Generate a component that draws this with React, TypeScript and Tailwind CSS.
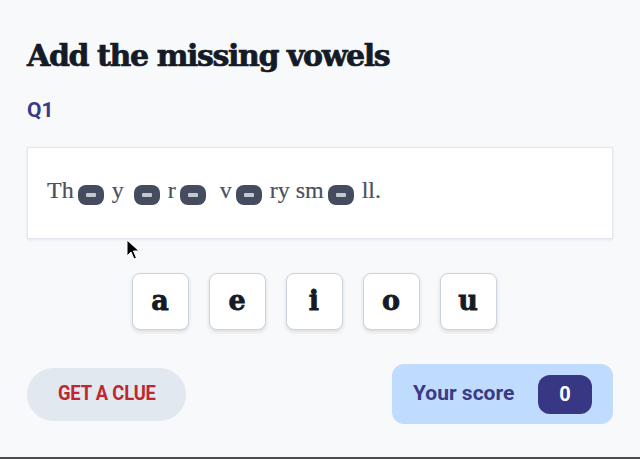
import React from "react";

const Blank = () => (
  <span className="inline-block w-[26px] h-[20px] rounded-[8px] bg-[#454c5f] ml-[4px] mr-[8px] align-[-7px] pt-[8px]">
    <span className="block mx-auto w-[10px] h-[4px] rounded-[1px] bg-[#c3c7cf]" />
  </span>
);

export default function App() {
  const vowels = ["a", "e", "i", "o", "u"];
  return (
    <div className="relative h-[459px] bg-[#f8f9fb] border-b-2 border-[#4d4d4d] px-[27px] pt-[36px] overflow-hidden">
      <h1 className="text-[30px] leading-[40px] font-bold text-[#151b26] [font-family:'DejaVu_Serif',serif] tracking-[-1.4px] [-webkit-text-stroke:0.7px_#151b26]">
        Add the missing vowels
      </h1>
      <div className="mt-[20px] text-[21px] leading-[28px] font-bold text-[#383a8a] [font-family:Roboto,sans-serif]">
        Q1
      </div>
      <div className="mt-[23px] h-[92px] bg-white border border-[#e1e6ee] shadow-[0_1px_3px_rgba(0,0,0,0.08)] flex items-center pl-[19px] pb-[5px]">
        <p className="text-[24px] leading-[28px] text-[#4a5060] [font-family:'Liberation_Serif',serif] [-webkit-text-stroke:0.2px_#4a5060]">
          Th<Blank />y <Blank />r<Blank /> v<Blank />ry sm<Blank />ll.
        </p>
      </div>
      <div className="mt-[34px] flex justify-center gap-[20px] pr-[12px]">
        {vowels.map((v) => (
          <button
            key={v}
            className="w-[57px] h-[57px] rounded-[8px] bg-white border border-[#cbd3df] shadow-[0_2px_4px_rgba(0,0,0,0.12)] flex items-center justify-center text-[27px] font-bold text-[#151b26] [font-family:'DejaVu_Serif',serif] [-webkit-text-stroke:0.8px_#151b26]"
          >
            {v}
          </button>
        ))}
      </div>
      <div className="mt-[34px] flex items-center justify-between">
        <button className="w-[159px] h-[53px] rounded-full bg-[#e2e8f0] text-[#c0262d] text-[21px] font-bold uppercase [font-family:Roboto,sans-serif] flex items-center justify-center">
          <span className="inline-block scale-x-[0.875] whitespace-nowrap tracking-[-0.2px]">Get a clue</span>
        </button>
        <div className="w-[221px] h-[60px] rounded-[12px] bg-[#bfdbfe] flex items-center justify-between pl-[21px] pr-[21px]">
          <span className="text-[21px] font-bold text-[#3b3a83] [font-family:Roboto,sans-serif]">
            Your score
          </span>
          <span className="w-[54px] h-[39px] rounded-[12px] bg-[#383784] text-white text-[20px] font-bold flex items-center justify-center [font-family:Roboto,sans-serif]">
            0
          </span>
        </div>
      </div>
      <svg
        className="absolute left-[126px] top-[239px]"
        width="14"
        height="22"
        viewBox="0 0 14 22"
      >
        <path
          d="M1 1 L1 17 L5 13 L8 20 L10.5 19 L7.5 12 L13 12 Z"
          fill="#000"
          stroke="#fff"
          strokeWidth="1"
          strokeLinejoin="round"
        />
      </svg>
    </div>
  );
}
